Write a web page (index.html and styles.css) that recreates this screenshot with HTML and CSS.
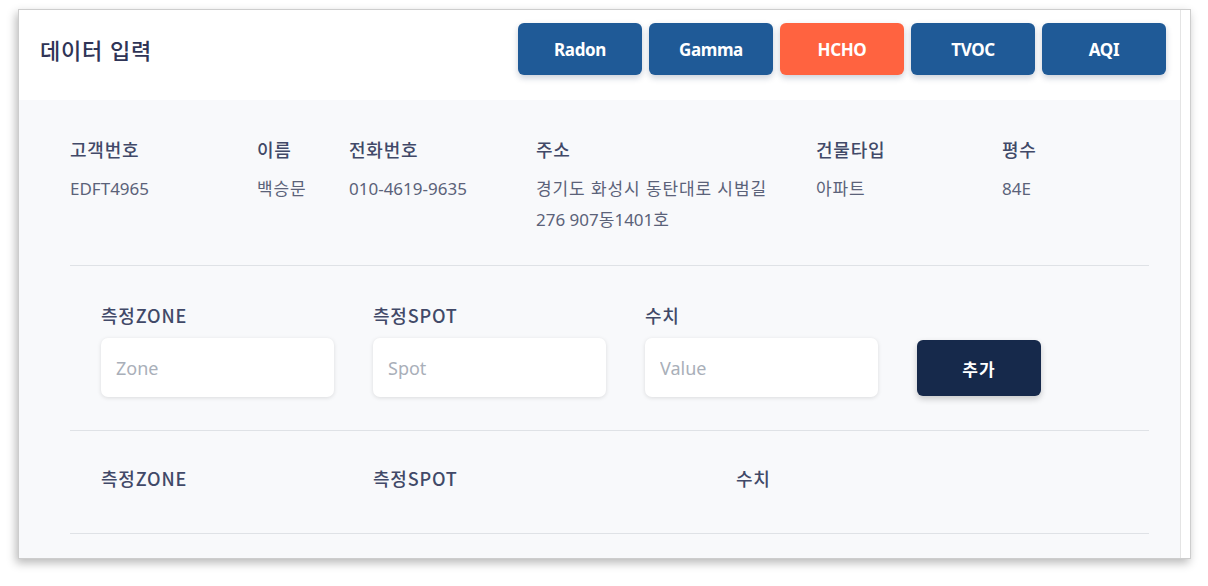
FILE: index.html
```html
<!DOCTYPE html>
<html lang="ko">
<head>
<meta charset="utf-8">
<title>데이터 입력</title>
<link rel="stylesheet" href="styles.css">
</head>
<body>
<div class="window">
  <div class="main">
    <header class="header">
      <h1 class="title">데이터 입력</h1>
      <nav class="tabs">
        <button class="tab">Radon</button>
        <button class="tab">Gamma</button>
        <button class="tab tab-active">HCHO</button>
        <button class="tab">TVOC</button>
        <button class="tab">AQI</button>
      </nav>
    </header>
    <section class="content">
      <div class="info">
        <div class="info-head">고객번호</div>
        <div class="info-head">이름</div>
        <div class="info-head">전화번호</div>
        <div class="info-head">주소</div>
        <div class="info-head">건물타입</div>
        <div class="info-head">평수</div>
        <div class="info-val">EDFT4965</div>
        <div class="info-val ko">백승문</div>
        <div class="info-val">010-4619-9635</div>
        <div class="info-val ko">경기도 화성시 동탄대로 시범길<br><span class="addr-2">276 907동1401호</span></div>
        <div class="info-val ko">아파트</div>
        <div class="info-val">84E</div>
      </div>
      <div class="divider"></div>
      <div class="form">
        <label class="field">
          <span class="field-label">측정ZONE</span>
          <input class="field-input" type="text" placeholder="Zone">
        </label>
        <label class="field">
          <span class="field-label">측정SPOT</span>
          <input class="field-input" type="text" placeholder="Spot">
        </label>
        <label class="field">
          <span class="field-label">수치</span>
          <input class="field-input" type="text" placeholder="Value">
        </label>
        <button class="add-btn">추가</button>
      </div>
      <div class="divider"></div>
      <div class="list-head">
        <div class="lh lh-zone">측정ZONE</div>
        <div class="lh lh-spot">측정SPOT</div>
        <div class="lh">수치</div>
      </div>
      <div class="divider"></div>
    </section>
  </div>
  <div class="scrollbar"></div>
</div>
</body>
</html>
```

FILE: styles.css
```css
* { box-sizing: border-box; }
html, body { margin: 0; padding: 0; background: #ffffff; }
body {
  font-family: "Noto Sans", "Noto Sans CJK KR", sans-serif;
  width: 1208px;
  height: 586px;
  overflow: hidden;
}
.window {
  margin: 9px 0 0 18px;
  width: 1173px;
  height: 550px;
  border: 1px solid #cdcdcd;
  box-shadow: -2px 4px 9px rgba(0,0,0,0.28);
  display: flex;
  background: #fff;
}
.main {
  flex: 1;
  display: flex;
  flex-direction: column;
  min-width: 0;
}
.scrollbar {
  width: 10px;
  border-left: 1px solid #e4e4e4;
  background: #fff;
}
.header {
  height: 90px;
  background: #fff;
  display: flex;
  justify-content: space-between;
  align-items: center;
  padding: 0 14px 12px 21px;
}
.title {
  margin: 0;
  font-size: 22px;
  font-weight: 500;
  letter-spacing: 0.8px;
  color: #2f3456;
  font-family: "Noto Sans CJK KR", sans-serif;
}
.tabs {
  display: flex;
  gap: 7px;
}
.tab {
  width: 124px;
  height: 52px;
  border: none;
  border-radius: 6px;
  background: #1f5a97;
  color: #fff;
  font-family: "Noto Sans", sans-serif;
  font-weight: 700;
  font-size: 17px;
  letter-spacing: -0.4px;
  box-shadow: 0 3px 6px rgba(20,40,80,0.22);
  padding: 0;
}
.tab-active { background: #ff6340; }
.content {
  flex: 1;
  background: #f8f9fb;
  padding: 37px 31px 0 51px;
}
.info {
  display: grid;
  grid-template-columns: 187px 92px 187px 280px 186px 1fr;
  row-gap: 12px;
}
.info-head, .field-label, .lh {
  font-size: 18px;
  line-height: 24px;
  font-weight: 500;
  letter-spacing: 0.8px;
  color: #414968;
  font-family: "Noto Sans CJK KR", sans-serif;
}
.info-val {
  font-size: 17px;
  line-height: 31px;
  color: #5b6279;
  font-family: "Noto Sans", "Noto Sans CJK KR", sans-serif;
  letter-spacing: 0;
}
.info-val.ko { letter-spacing: 0.9px; }
.addr-2 { letter-spacing: 0; }
.divider {
  height: 1px;
  background: #dfe2e6;
}
.info + .divider { margin-top: 30px; }
.form {
  display: flex;
  align-items: flex-end;
  gap: 39px;
  padding: 37px 0 0 31px;
  margin-bottom: 33px;
}
.field {
  width: 233px;
  display: flex;
  flex-direction: column;
  gap: 11px;
}
.field-input {
  height: 59px;
  border: none;
  border-radius: 7px;
  background: #fff;
  box-shadow: 0 1px 4px rgba(0,0,0,0.12);
  padding: 0 15px;
  font-family: "Noto Sans", sans-serif;
  font-size: 18px;
  color: #333;
  outline: none;
}
.field-input::placeholder { color: #a9afb9; }
.add-btn {
  width: 124px;
  height: 56px;
  margin-bottom: 1px;
  border: none;
  border-radius: 6px;
  background: #16294b;
  color: #fff;
  font-family: "Noto Sans CJK KR", sans-serif;
  font-weight: 700;
  font-size: 17px;
  letter-spacing: 1px;
  box-shadow: 0 3px 6px rgba(0,0,0,0.2);
}
.list-head {
  display: flex;
  padding: 35px 0 0 31px;
  height: 102px;
}
.lh-zone { width: 272px; }
.lh-spot { width: 363px; }
```
